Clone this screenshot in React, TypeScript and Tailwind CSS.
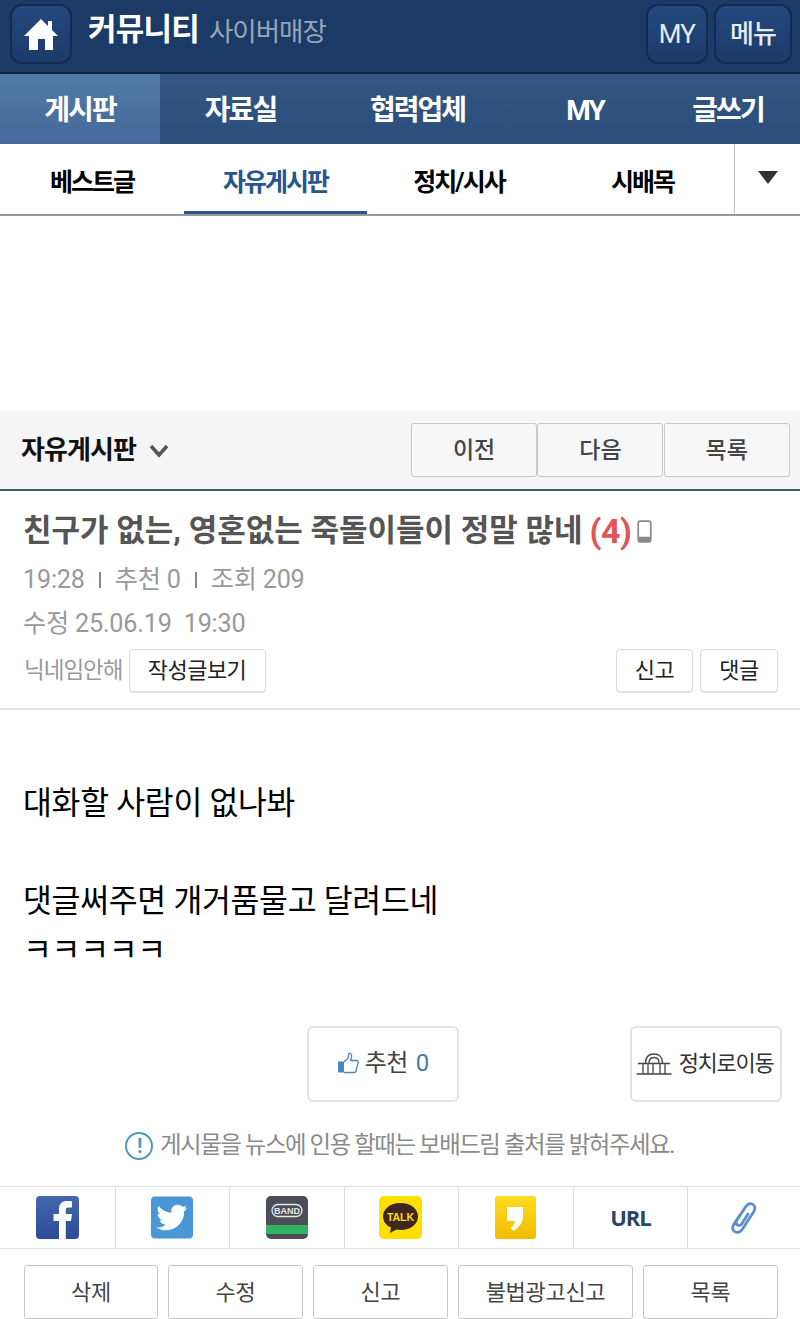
const font = { fontFamily: '"Roboto", "Noto Sans CJK KR", sans-serif' };

const HomeIcon = () => (
  <svg viewBox="0 0 34 32" className="w-[34px] h-[32px]">
    <path fill="#fff" d="M17 1 L24 8 V3 H28 V12 L34 18 H29 V32 H21 V21 H14 V32 H5 V18 H0 Z" />
  </svg>
);

const Facebook = () => (
  <svg viewBox="0 0 43 43" className="w-[43px] h-[43px]">
    <defs>
      <linearGradient id="fb" x1="0" y1="0" x2="0" y2="1">
        <stop offset="0" stopColor="#4468ae" />
        <stop offset="1" stopColor="#2b4b94" />
      </linearGradient>
    </defs>
    <rect width="43" height="43" rx="4" fill="url(#fb)" />
    <path fill="#fff" d="M23 43 V25 H17.5 V18 H23 V13 C23 7.5 26.5 5 31 5 C33 5 35 5.200 36 5.400 V11.500 H32.500 C30 11.500 29.800 12.800 29.800 14.500 V18 H36 L35 25 H29.800 V43 Z" />
  </svg>
);

const Twitter = () => (
  <svg viewBox="0 0 43 43" className="w-[42px] h-[43px]">
    <rect width="43" height="43" rx="4" fill="#4a97d6" />
    <path fill="#fff" d="M37 11.500 C35.800 12 34.700 12.400 33.500 12.500 C34.800 11.700 35.700 10.500 36.200 9.100 C35 9.800 33.600 10.400 32.200 10.600 C31 9.300 29.300 8.500 27.400 8.500 C23.800 8.500 20.900 11.400 20.900 15 C20.900 15.500 21 16 21.100 16.500 C15.700 16.200 10.900 13.600 7.700 9.700 C7.100 10.700 6.800 11.800 6.800 13 C6.800 15.300 8 17.300 9.700 18.400 C8.600 18.400 7.600 18.100 6.800 17.600 V17.700 C6.800 20.900 9 23.500 12 24.100 C11 24.400 9.900 24.400 9 24.200 C9.800 26.800 12.200 28.700 15.100 28.800 C12.300 31 8.800 32.100 5.500 31.700 C8.400 33.500 11.800 34.600 15.500 34.600 C27.400 34.600 33.900 24.700 33.900 16.200 V15.400 C35.100 14.400 36.200 13.100 37 11.500 Z" />
  </svg>
);

const Band = () => (
  <svg viewBox="0 0 42 43" className="w-[42px] h-[43px]">
    <rect width="42" height="43" rx="5" fill="#4c4d57" />
    <rect y="29" width="42" height="9" fill="#2fb45f" />
    <rect x="6" y="8.500" width="30" height="12" rx="6" fill="none" stroke="#e8e8e8" strokeWidth="1.300" />
    <text x="21" y="17.800" textAnchor="middle" fontSize="9" fontWeight="700" fill="#e8e8e8" fontFamily="Liberation Sans">BAND</text>
  </svg>
);

const Kakao = () => (
  <svg viewBox="0 0 43 43" className="w-[43px] h-[43px]">
    <rect width="43" height="43" rx="5" fill="#ffdf00" />
    <path fill="#3e2723" d="M21.500 7 C11 7 4 13 4 20.500 C4 25.500 7.500 29.500 12 31.500 L11 37 L17.500 33.500 C18.800 33.800 20 34 21.500 34 C32 34 39 28 39 20.500 C39 13 32 7 21.500 7 Z" />
    <text x="21.500" y="24.500" textAnchor="middle" fontSize="10.500" fontWeight="700" fill="#ffdf00" fontFamily="Liberation Sans">TALK</text>
  </svg>
);

const KakaoStory = () => (
  <svg viewBox="0 0 41 43" className="w-[41px] h-[43px]">
    <defs>
      <linearGradient id="ks" x1="0" y1="0" x2="0" y2="1">
        <stop offset="0" stopColor="#ffdc1e" />
        <stop offset="1" stopColor="#f2bb00" />
      </linearGradient>
    </defs>
    <rect width="41" height="43" rx="3" fill="url(#ks)" />
    <path fill="#fff" d="M12 11 H28 V20 C28 26 25 31 18.500 35 L15.500 32 C18 30 19.600 28 20 25 H12 Z" />
  </svg>
);

const Clip = () => (
  <svg viewBox="0 0 30 32" className="w-[30px] h-[32px]" fill="none" stroke="#5b8fc9" strokeWidth="2.800" strokeLinecap="round">
    <path d="M11 13 L5 22 C2.500 26 4 29 6.500 30 C9 31 11.500 30 13.500 27 L24.500 10 C27 6 26 3.500 23.500 2.200 C21 1 18.500 2 16.500 5 L8 18 C6.800 20 7 22 8.500 23 C10 24 12 23.200 13 21.500 L19 12" />
  </svg>
);

const Thumb = () => (
  <svg viewBox="0 0 22 22" className="w-[22px] h-[22px]">
    <rect x="1" y="9.500" width="6" height="11" fill="#4c86c2" />
    <path fill="none" stroke="#4c86c2" strokeWidth="1.300" d="M7 10 L11 6 L12 1.500 C14 1 15 3 14.500 5 L13.500 8.500 H19.500 C21 8.500 21.500 10 21 11 L19 19 C18.800 20 18 20.500 17 20.500 H7" />
  </svg>
);

const Assembly = () => (
  <svg viewBox="0 0 36 22" className="w-[36px] h-[22px]" fill="none" stroke="#444" strokeWidth="1.300">
    <path d="M0.500 21 H35.500 M2 10.500 H34 M7 10.500 V21 M12 10.500 V21 M17 10.500 V21 M24 10.500 V21 M29 10.500 V21" />
    <path d="M9.500 10 C9.500 4 13 1 18 1 C23 1 26.500 4 26.500 10 M13 10 C13 6.500 15 4.500 18 4.500 C21 4.500 23 6.500 23 10" />
  </svg>
);

const NavItem = ({ label, className }: { label: string; className: string }) => (
  <div className={`h-full flex items-center justify-center pt-[4px] ${className}`}>{label}</div>
);

const Tab = ({ label, active }: { label: string; active?: boolean }) => (
  <div className={`flex items-center justify-center h-full pt-[10px] text-[25px] font-bold tracking-[-2px] border-b-[3px] ${active ? "text-[#27568f] border-[#27568f]" : "text-black border-transparent"}`}>
    {label}
  </div>
);

const SmallBtn = ({ label, className }: { label: string; className: string }) => (
  <button className={`h-[43px] bg-white border border-[#dcdcdc] rounded-[4px] text-[22px] tracking-[-0.500px] text-[#222] shadow-[0_1px_0_#e4e4e4] ${className}`}>
    {label}
  </button>
);

const PagerBtn = ({ label }: { label: string }) => (
  <button className="w-[126px] h-[54px] mr-[0.3px] pt-[2px] bg-[#f7f7f7] border border-[#c9c9c9] rounded-[3px] text-[23px] font-medium text-[#444]">
    {label}
  </button>
);

const ShareCell = ({ children, className = "" }: { children: React.ReactNode; className?: string }) => (
  <div className={`flex items-center justify-center h-full border-r border-[#dddddd] ${className}`}>{children}</div>
);

const BottomBtn = ({ label, className }: { label: string; className: string }) => (
  <button className={`h-[54px] bg-white border border-[#c6c6c6] rounded-[3px] text-[22px] tracking-[-0.300px] text-[#444] ${className}`}>
    {label}
  </button>
);

export default function App() {
  return (
    <div style={font} className="w-[800px] h-[1319px] overflow-hidden bg-white">
      {/* top header */}
      <div className="h-[74px] bg-[#1b3a66] border-b-[2px] border-[#10243f] flex items-center justify-between pl-[10px] pr-[8px] pb-[4px]">
        <div className="flex items-center">
          <button className="w-[62px] h-[60px] rounded-[12px] border-[2px] border-[#122a4d] bg-gradient-to-b from-[#24497f] to-[#1b3b69] flex items-center justify-center">
            <HomeIcon />
          </button>
          <span className="ml-[16px] mb-[7px] text-[31px] font-bold tracking-[-0.800px] text-white">커뮤니티</span>
          <span className="ml-[10px] mb-[4px] text-[26.500px] tracking-[-1px] text-[#98a6ba]">사이버매장</span>
        </div>
        <div className="flex items-center gap-[6px]">
          <button className="w-[62px] h-[60px] rounded-[12px] border-[2px] border-[#122a4d] bg-gradient-to-b from-[#24497f] to-[#1b3b69] text-[26px] text-[#e6ebf2] tracking-[-0.800px]">MY</button>
          <button className="w-[78px] h-[60px] rounded-[12px] border-[2px] border-[#122a4d] bg-gradient-to-b from-[#24497f] to-[#1b3b69] text-[26px] font-medium text-[#e6ebf2] tracking-[-0.800px]">메뉴</button>
        </div>
      </div>

      {/* main nav */}
      <div className="h-[70px] bg-gradient-to-b from-[#345683] to-[#2b4d7b] flex items-center text-[28px] font-bold text-white tracking-[-2px]">
        <NavItem label="게시판" className="w-[160px] bg-gradient-to-b from-[#527aa8] to-[#44699a]" />
        <NavItem label="자료실" className="w-[161px]" />
        <NavItem label="협력업체" className="w-[195px] pr-[2px]" />
        <NavItem label="MY" className="w-[138px]" />
        <NavItem label="글쓰기" className="w-[146px] pl-[2px]" />
      </div>

      {/* board tabs */}
      <div className="h-[72px] flex border-b-[2px] border-[#999999]">
        <div className="w-[184px]"><Tab label="베스트글" /></div>
        <div className="w-[183px]"><Tab label="자유게시판" active /></div>
        <div className="w-[184px]"><Tab label="정치/시사" /></div>
        <div className="w-[183px]"><Tab label="시배목" /></div>
        <div className="flex-1 border-l border-[#c8c8c8] flex items-center justify-center pb-[4px]">
          <div className="w-0 h-0 border-l-[10px] border-r-[10px] border-t-[13px] border-l-transparent border-r-transparent border-t-[#333333]" />
        </div>
      </div>

      {/* ad space */}
      <div className="h-[195px]" />

      {/* board bar */}
      <div className="h-[80px] bg-[#f5f5f5] border-b-[2px] border-[#3d5a66] flex items-center justify-between pl-[21px] pr-[10px]">
        <div className="flex items-center gap-[13px]">
          <span className="text-[26px] font-bold tracking-[-0.900px] text-[#111]">자유게시판</span>
          <svg viewBox="0 0 20 14" className="w-[20px] h-[14px] mt-[2px]" fill="none" stroke="#555" strokeWidth="3.500">
            <path d="M2 2 L10 11 L18 2" />
          </svg>
        </div>
        <div className="flex">
          <PagerBtn label="이전" />
          <PagerBtn label="다음" />
          <PagerBtn label="목록" />
        </div>
      </div>

      {/* post head */}
      <div className="h-[219px] border-b-[2px] border-[#e2e2e2] px-[23px] pt-[18px]">
        <div className="flex items-center h-[44px]">
          <span className="text-[31px] font-bold text-[#555555]">친구가 없는, 영혼없는 죽돌이들이 정말 많네</span>
          <span className="ml-[7px] text-[34px] font-bold text-[#e05555] tracking-[-0.500px]">(4)</span>
          <svg viewBox="0 0 14 22" className="ml-[6px] w-[15px] h-[23px]">
            <rect x="1" y="1" width="12" height="20" rx="2" fill="none" stroke="#888" strokeWidth="1.600" />
            <rect x="1" y="16" width="12" height="5" rx="1" fill="#888" />
          </svg>
        </div>
        <div className="mt-[9px] h-[36px] flex items-center text-[25.200px] text-[#999999] tracking-[-0.200px]">
          <span>19:28</span>
          <span className="mx-[14px] w-[2px] h-[16px] bg-[#888888]" />
          <span>추천 0</span>
          <span className="mx-[14px] w-[2px] h-[16px] bg-[#888888]" />
          <span>조회 209</span>
        </div>
        <div className="mt-[8px] h-[36px] flex items-center text-[25.200px] text-[#999999] tracking-[-0.200px] whitespace-pre">
          수정 25.06.19  19:30
        </div>
        <div className="mt-[7px] -mr-[1px] flex items-center justify-between">
          <div className="flex items-center gap-[6px]">
            <span className="pl-[1px] text-[22.500px] tracking-[-1px] text-[#999999]">닉네임안해</span>
            <SmallBtn label="작성글보기" className="w-[137px]" />
          </div>
          <div className="flex gap-[7px]">
            <SmallBtn label="신고" className="w-[77px]" />
            <SmallBtn label="댓글" className="w-[78px]" />
          </div>
        </div>
      </div>

      {/* body */}
      <div className="h-[316px] pl-[23px] pt-[69px] text-[31.400px] text-black tracking-[-0.300px] leading-[49px]">
        <p>대화할 사람이 없나봐</p>
        <p className="h-[49px]" />
        <p>댓글써주면 개거품물고 달려드네</p>
        <p>ㅋㅋㅋㅋㅋ</p>
      </div>

      {/* vote */}
      <div className="h-[160px]">
        <div className="flex justify-between pl-[307px] pr-[18px]">
          <button className="w-[152px] h-[76px] border-[2px] border-[#e2e2e2] rounded-[6px] flex items-center justify-center gap-[6px] pb-[3px]">
            <Thumb />
            <span className="text-[24px] text-[#444] tracking-[-0.700px]">추천</span>
            <span className="text-[24px] text-[#4c78a8] ml-[2px]">0</span>
          </button>
          <button className="w-[152px] h-[76px] border-[2px] border-[#e2e2e2] rounded-[6px] flex items-center justify-center gap-[7px] pb-[1px] pr-[3px]">
            <Assembly />
            <span className="text-[22px] text-[#333] tracking-[-1.300px]">정치로이동</span>
          </button>
        </div>
        <div className="mt-[26px] flex items-center justify-center gap-[7px] pr-[1px] text-[23.400px] tracking-[-1.400px] text-[#8a8a8a]">
          <span className="w-[28px] h-[28px] rounded-full border-[2px] border-[#4a9bb5] flex items-center justify-center text-[20px] font-bold text-[#4a9bb5]">!</span>
          게시물을 뉴스에 인용 할때는 보배드림 출처를 밝혀주세요.
        </div>
      </div>

      {/* share */}
      <div className="h-[63px] border-y border-[#dddddd] grid grid-cols-[116px_114px_115px_114px_115px_114px_1fr]">
        <ShareCell><Facebook /></ShareCell>
        <ShareCell className="pr-[2px]"><Twitter /></ShareCell>
        <ShareCell><Band /></ShareCell>
        <ShareCell className="pr-[2px]"><Kakao /></ShareCell>
        <ShareCell className="pr-[2px]"><KakaoStory /></ShareCell>
        <ShareCell><span className="text-[22px] font-bold text-[#2b4468] tracking-[-1px]" style={{ fontFamily: "Open Sans, sans-serif" }}>URL</span></ShareCell>
        <div className="flex items-center justify-center h-full"><Clip /></div>
      </div>

      {/* bottom buttons */}
      <div className="flex gap-[10px] pl-[24px] pt-[16px]">
        <BottomBtn label="삭제" className="w-[134px]" />
        <BottomBtn label="수정" className="w-[135px]" />
        <BottomBtn label="신고" className="w-[135px]" />
        <BottomBtn label="불법광고신고" className="w-[175px]" />
        <BottomBtn label="목록" className="w-[135px]" />
      </div>
    </div>
  );
}
